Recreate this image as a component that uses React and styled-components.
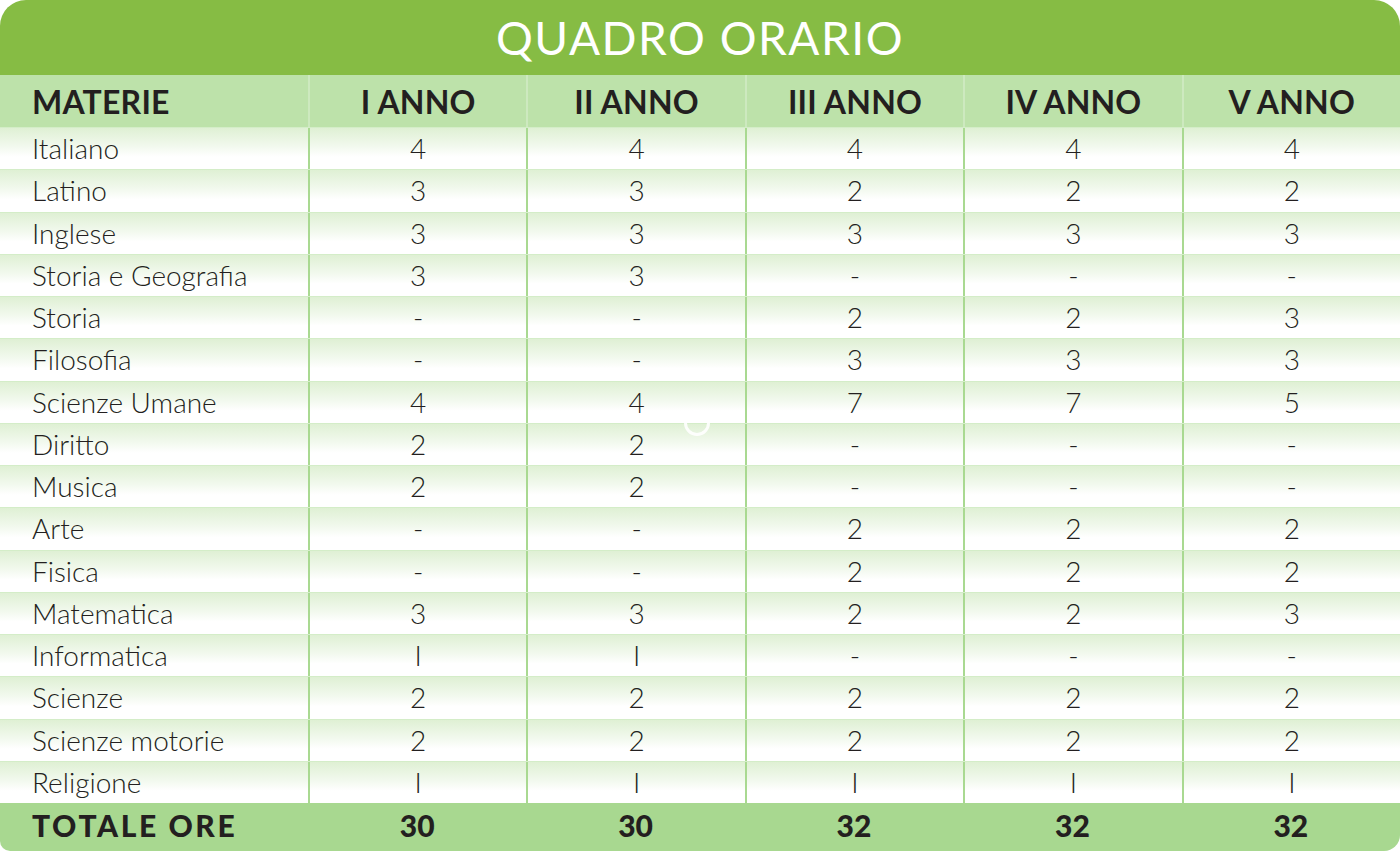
import React from 'react'
import styled, { createGlobalStyle } from 'styled-components'

const GlobalStyle = createGlobalStyle`
  html, body {
    margin: 0;
    padding: 0;
    background: #ffffff;
  }
`

const rows = [
  ['Italiano', '4', '4', '4', '4', '4'],
  ['Latino', '3', '3', '2', '2', '2'],
  ['Inglese', '3', '3', '3', '3', '3'],
  ['Storia e Geografia', '3', '3', '-', '-', '-'],
  ['Storia', '-', '-', '2', '2', '3'],
  ['Filosofia', '-', '-', '3', '3', '3'],
  ['Scienze Umane', '4', '4', '7', '7', '5'],
  ['Diritto', '2', '2', '-', '-', '-'],
  ['Musica', '2', '2', '-', '-', '-'],
  ['Arte', '-', '-', '2', '2', '2'],
  ['Fisica', '-', '-', '2', '2', '2'],
  ['Matematica', '3', '3', '2', '2', '3'],
  ['Informatica', 'I', 'I', '-', '-', '-'],
  ['Scienze', '2', '2', '2', '2', '2'],
  ['Scienze motorie', '2', '2', '2', '2', '2'],
  ['Religione', 'I', 'I', 'I', 'I', 'I'],
]

const years = ['I ANNO', 'II ANNO', 'III ANNO', 'IV ANNO', 'V ANNO']
const totals = ['30', '30', '32', '32', '32']

function App() {
  return (
    <>
      <GlobalStyle />
      <Card>
        <Title>QUADRO ORARIO</Title>
        <HeadRow>
          <HeadCell first>MATERIE</HeadCell>
          {years.map(y => <HeadCell key={y}>{y}</HeadCell>)}
        </HeadRow>
        {rows.map(r => (
          <Row key={r[0]}>
            <Cell first>{r[0]}</Cell>
            {r.slice(1).map((v, i) => <Cell key={i}>{v}</Cell>)}
          </Row>
        ))}
        <TotalRow>
          <TotalCell first>TOTALE ORE</TotalCell>
          {totals.map((t, i) => <TotalCell key={i}>{t}</TotalCell>)}
        </TotalRow>
        <Ring />
      </Card>
    </>
  )
}

const Card = styled.div`
  position: relative;
  width: 1400px;
  height: 851px;
  display: flex;
  flex-direction: column;
  border-radius: 26px 26px 16px 10px;
  overflow: hidden;
  font-family: 'Lato', 'Open Sans', sans-serif;
  color: #231f20;
`

const Ring = styled.div`
  position: absolute;
  left: 684px;
  top: 410px;
  width: 26px;
  height: 26px;
  border: 3px solid rgba(255, 255, 255, 0.9);
  border-radius: 50%;
  box-sizing: border-box;
`

const Title = styled.div`
  height: 75px;
  flex: none;
  background: #86bc44;
  color: #ffffff;
  display: flex;
  align-items: center;
  justify-content: center;
  font-size: 46px;
  font-weight: 400;
  letter-spacing: 1.5px;
  box-sizing: border-box;
`

const RowBase = styled.div`
  display: grid;
  grid-template-columns: 308px repeat(5, 1fr);
  flex: none;
`

const HeadRow = styled(RowBase)`
  height: 52px;
  background: #bde2aa;
`

const Row = styled(RowBase)`
  height: 42.25px;
  box-sizing: border-box;
  border-top: 1px solid #d4edc8;
  background: linear-gradient(to bottom, #dff0d4 0%, #f2f9ee 45%, #ffffff 70%);
`

const TotalRow = styled(RowBase)`
  height: 48px;
  background: #a8d890;
`

const CellBase = styled.div`
  display: flex;
  align-items: center;
  justify-content: ${p => (p.first ? 'flex-start' : 'center')};
  padding-left: ${p => (p.first ? '32px' : '0')};
  box-sizing: border-box;
  white-space: nowrap;
`

const HeadCell = styled(CellBase)`
  font-size: 32px;
  font-weight: 700;
  letter-spacing: 0.2px;
  border-left: ${p => (p.first ? 'none' : '2px solid #cde9bf')};
`

const Cell = styled(CellBase)`
  font-size: 28px;
  font-weight: 300;
  border-left: ${p => (p.first ? 'none' : '2px solid #a9d991')};
  padding-bottom: 1px;
`

const TotalCell = styled(CellBase)`
  font-size: 30px;
  font-weight: 900;
  letter-spacing: ${p => (p.first ? '2.6px' : '0')};
  padding-bottom: 4px;
`

export default App
